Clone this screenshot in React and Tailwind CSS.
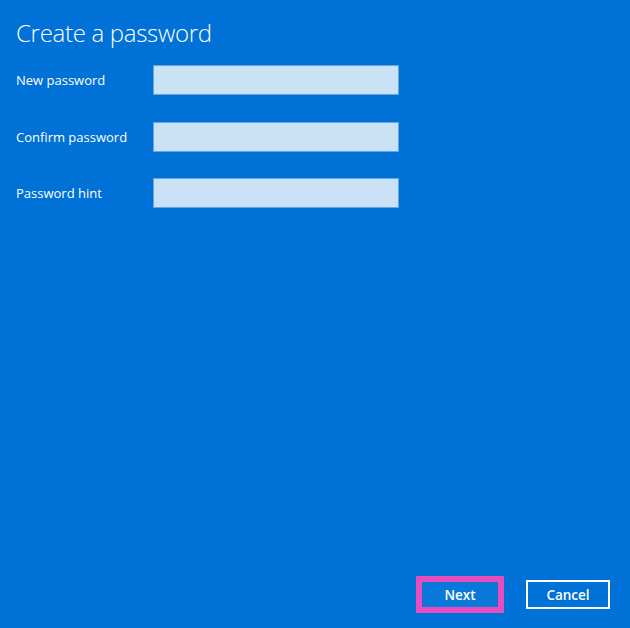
export default function App() {
  const rows = ["New password", "Confirm password", "Password hint"];
  return (
    <div
      className="w-[630px] h-[628px] bg-[#0071d6] flex flex-col text-white overflow-hidden"
      style={{ fontFamily: '"Open Sans", "Noto Sans", sans-serif' }}
    >
      <h1 className="ml-[16px] mt-[16px] h-[36px] text-[24px] leading-[34px] font-light tracking-[-0.3px]">
        Create a password
      </h1>
      <div className="flex flex-col gap-[26.5px] mt-[13px]">
        {rows.map((r) => (
          <div key={r} className="flex items-center h-[30px]">
            <span className="w-[153px] pl-[16px] text-[13px] leading-[30px]">{r}</span>
            <div className="w-[246px] h-[30px] bg-[#cbe2f6] border border-[#5fa6ea]" />
          </div>
        ))}
      </div>
      <div className="flex-1" />
      <div className="flex items-center justify-end mb-[15px] pr-[20px] gap-[22px]">
        <div className="w-[88px] h-[37px] shrink-0 border-[6px] border-[#e94cbc] bg-[#0a78d8] flex items-center justify-center">
          <span className="text-[13.5px] leading-[20px] font-semibold">Next</span>
        </div>
        <div className="w-[84px] h-[29px] shrink-0 border-2 border-white flex items-center justify-center">
          <span className="text-[13.5px] leading-[20px] font-semibold">Cancel</span>
        </div>
      </div>
    </div>
  );
}
